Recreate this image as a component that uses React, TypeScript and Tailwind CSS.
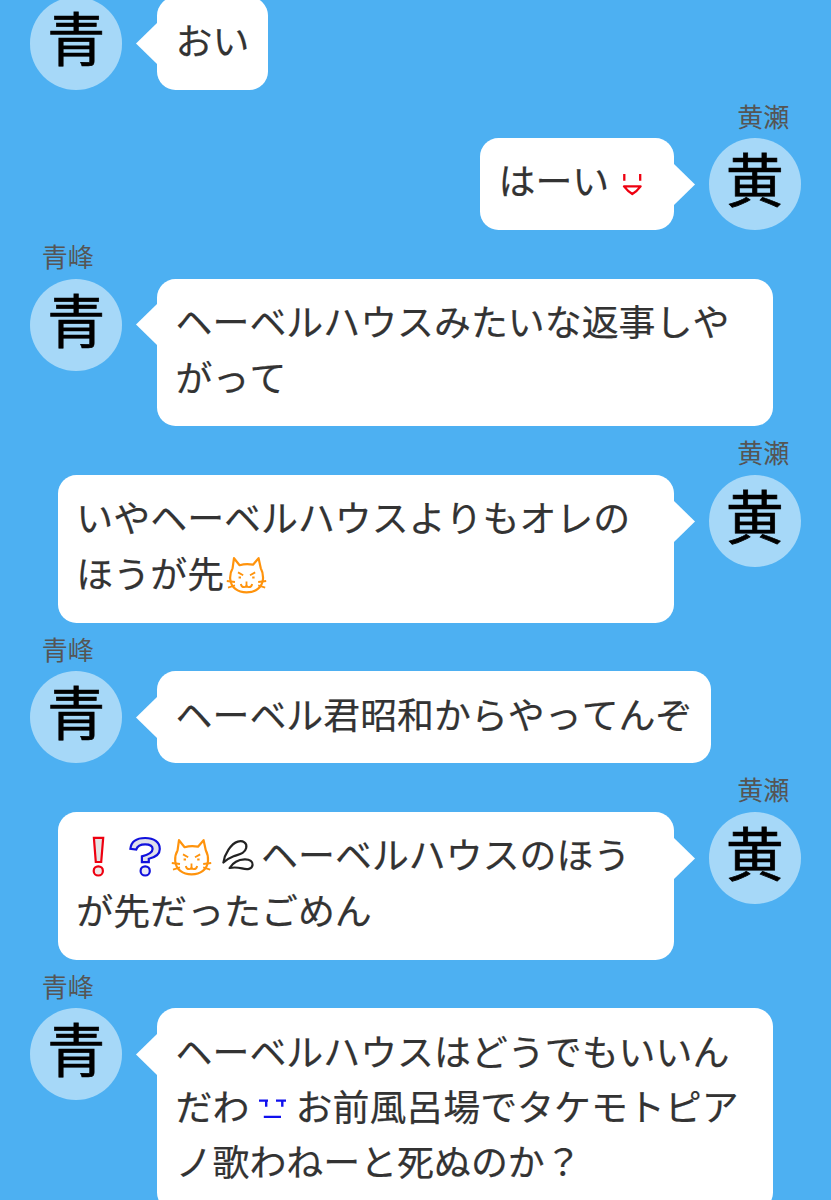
import type { ReactNode } from 'react';
import clsx from 'clsx';

interface Message {
    side: 'left' | 'right';
    name?: string;
    lines: ReactNode[];
}

function Emoji({ color, children }: { color: string; children: ReactNode }) {
    return (
        <svg
            viewBox="0 0 46.2 46.2"
            className={clsx('inline-block h-[46.2px] w-[46.2px] my-[4.6px] align-top', color)}
            fill="none"
            stroke="currentColor"
            strokeWidth="2.2"
        >
            {children}
        </svg>
    );
}

const Smile = () => (
    <Emoji color="text-[#ee0010]">
        <path d="M15.3 13.1v6.6M31.2 13.1v6.6" strokeWidth="2.3" />
        <path d="M15 25.4H31.6Q28 30.3 23.3 33Q18.8 30.3 15 25.4Z" strokeLinejoin="round" strokeWidth="2.3" />
    </Emoji>
);

const Cat = () => (
    <Emoji color="text-[#ff930c]">
        <path
            d="M10 5.2L15.6 12.2Q22.3 10.2 29 11.7L34.6 5.2L36.8 15.2Q39.4 20 39 26C38.2 34.8 31.5 39.4 22.6 39.4S7 34.8 6.2 26Q5.8 20 8.6 15.2Z"
            strokeLinejoin="round"
        />
        <path d="M2.8 28L11 29M4 34.6L11 32.4M42.2 28L34.2 29M41.2 34.6L34.2 32.4" strokeWidth="1.8" />
        <path d="M14 19.4L19.2 22.2M31.2 19.4L26 22.2" strokeWidth="1.8" />
        <path d="M14.6 24.6h2.4M28.2 24.6h2.4" strokeWidth="2" />
        <path d="M16.8 31Q17.4 34.2 20.2 34.2Q22.5 34.2 22.5 31.6V28.6M28.2 31Q27.6 34.2 24.8 34.2Q22.5 34.2 22.5 31.6" strokeWidth="1.8" />
    </Emoji>
);

const Exclamation = () => (
    <Emoji color="text-[#ee0010]">
        <path d="M17.9 2.8H27.2L25.2 27H19.8Z" fill="#e4e4e4" />
        <circle cx="22.3" cy="35.9" r="4.6" fill="#f0e8e8" />
    </Emoji>
);

const Question = () => (
    <Emoji color="text-[#1010dd]">
        <path
            d="M7.4 13.8C8.2 6.6 14 3 22.2 3C31 3 36.8 7.3 36.8 14C36.8 20.2 32 22.4 25.8 23.8V27.2H18.9V21.4C25.4 19.6 29.6 17.6 29.6 14C29.6 11 26.8 9.4 22.2 9.4C17.8 9.4 14.4 11 13.2 14.6Z"
            fill="#e0e0ea"
        />
        <circle cx="22.2" cy="35.9" r="4.6" fill="#e8e8f4" />
    </Emoji>
);

const Drops = () => (
    <Emoji color="text-[#222222]">
        <path d="M8.4 27.6C9.4 19.4 16.2 8.4 22.8 6.6C28 5.2 32.4 8 31.2 13C29.8 18.6 24.6 19.2 18.6 21.2C14.4 22.8 11.2 24.8 8.4 27.6Z" strokeLinejoin="round" />
        <path d="M14.6 33C18 27.6 23.4 24.6 29.6 24.4C35 24.2 38 26.6 37.6 30C37 34.6 32 34.8 27 33.4C22.6 32.4 18.6 32.2 14.6 33Z" strokeLinejoin="round" />
    </Emoji>
);

const Neutral = () => (
    <Emoji color="text-[#1010ee]">
        <path d="M10 13.6H19M17.2 13.6V19.8M27 13.6H37M33.3 13.6V19.8M14.8 29.9H32" strokeWidth="2.4" />
    </Emoji>
);

const messages: Message[] = [
    { side: 'left', lines: ['おい'] },
    { side: 'right', name: '黄瀬', lines: [<>はーい<Smile /></>] },
    { side: 'left', name: '青峰', lines: ['ヘーベルハウスみたいな返事しや', 'がって'] },
    { side: 'right', name: '黄瀬', lines: ['いやヘーベルハウスよりもオレの', <>ほうが先<Cat /></>] },
    { side: 'left', name: '青峰', lines: ['ヘーベル君昭和からやってんぞ'] },
    {
        side: 'right',
        name: '黄瀬',
        lines: [<><Exclamation /><Question /><Cat /><Drops />ヘーベルハウスのほう</>, 'が先だったごめん'],
    },
    {
        side: 'left',
        name: '青峰',
        lines: ['ヘーベルハウスはどうでもいいん', <>だわ<Neutral />お前風呂場でタケモトピア</>, 'ノ歌わねーと死ぬのか？'],
    },
];

function MessageRow({ side, name, lines }: Message) {
    const right = side === 'right';

    return (
        <div>
            <div className={clsx('h-[48.5px] px-[11.7px] pt-[6px] text-[26px] leading-[40px] text-[#555555]', right && 'text-right')}>
                {name}
            </div>
            <div className={clsx('flex items-start gap-[34.8px]', right && 'flex-row-reverse')}>
                <div className="flex h-[92.3px] w-[92.3px] shrink-0 justify-center rounded-full bg-[#a6d8f8] text-[58px] leading-[78px] text-black [-webkit-text-stroke:0.7px_black]">
                    {right ? '黄' : '青'}
                </div>
                <div
                    className={clsx(
                        'relative rounded-[18.5px] bg-white p-[18.46px] text-[36.93px] leading-[47.4px] whitespace-nowrap text-[#333333] [-webkit-text-stroke:0.2px_#333333]',
                        lines.length > 1 && 'w-[616px]'
                    )}
                >
                    <svg
                        viewBox="0 0 21 41"
                        className={clsx('absolute top-[25.6px] h-[41px] w-[21px] fill-white', right ? '-right-[20.8px] rotate-180' : '-left-[20.8px]')}
                    >
                        <path d="M0 20.5L21 0V41Z" />
                    </svg>
                    {lines.map((line, i) => (
                        <div key={i} className="h-[55.4px]">{line}</div>
                    ))}
                </div>
            </div>
        </div>
    );
}

export default function App() {
    return (
        <div className="h-[1200px] w-[831px] overflow-hidden bg-[#4db0f2] font-['Noto_Sans_CJK_JP',sans-serif] [font-kerning:none]" lang="ja">
            <div className="-mt-[51.3px] px-[30px]">
                {messages.map((message, i) => (
                    <MessageRow key={i} {...message} />
                ))}
            </div>
        </div>
    );
}
